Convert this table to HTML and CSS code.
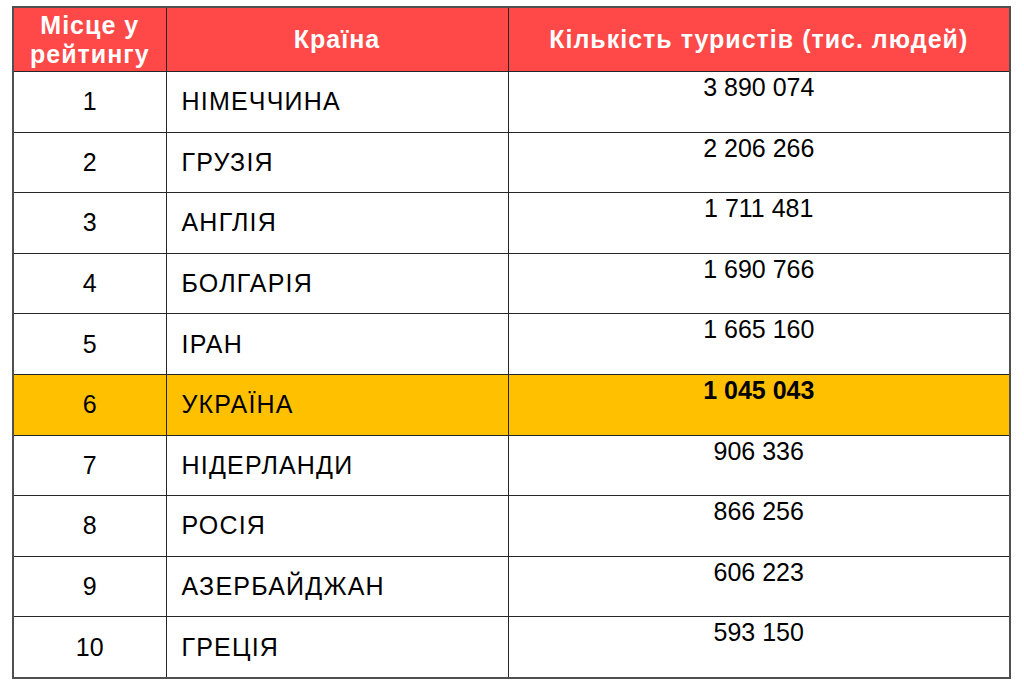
FILE: index.html
```html
<!DOCTYPE html>
<html lang="uk">
<head>
<meta charset="utf-8">
<title>Рейтинг країн</title>
<link rel="stylesheet" href="styles.css">
</head>
<body>
<table class="rating">
  <colgroup>
    <col class="col-rank">
    <col class="col-country">
    <col class="col-count">
  </colgroup>
  <thead>
    <tr class="head-row">
      <th>Місце у рейтингу</th>
      <th>Країна</th>
      <th>Кількість туристів (тис. людей)</th>
    </tr>
  </thead>
  <tbody>
    <tr><td class="rank">1</td><td class="country">НІМЕЧЧИНА</td><td class="count">3 890 074</td></tr>
    <tr><td class="rank">2</td><td class="country">ГРУЗІЯ</td><td class="count">2 206 266</td></tr>
    <tr><td class="rank">3</td><td class="country">АНГЛІЯ</td><td class="count">1 711 481</td></tr>
    <tr><td class="rank">4</td><td class="country">БОЛГАРІЯ</td><td class="count">1 690 766</td></tr>
    <tr><td class="rank">5</td><td class="country">ІРАН</td><td class="count">1 665 160</td></tr>
    <tr class="highlight"><td class="rank">6</td><td class="country">УКРАЇНА</td><td class="count strong">1 045 043</td></tr>
    <tr><td class="rank">7</td><td class="country">НІДЕРЛАНДИ</td><td class="count">906 336</td></tr>
    <tr><td class="rank">8</td><td class="country">РОСІЯ</td><td class="count">866 256</td></tr>
    <tr><td class="rank">9</td><td class="country">АЗЕРБАЙДЖАН</td><td class="count">606 223</td></tr>
    <tr><td class="rank">10</td><td class="country">ГРЕЦІЯ</td><td class="count">593 150</td></tr>
  </tbody>
</table>
</body>
</html>
```
FILE: styles.css
```css
html, body {
  margin: 0;
  padding: 0;
  background: #ffffff;
}

body {
  padding: 6px 0 0 12px;
  font-family: "Liberation Sans", Arial, sans-serif;
  color: #000;
}

.rating {
  border-collapse: collapse;
  table-layout: fixed;
  width: 997px;
  border: 2px solid #505050;
}

.col-rank { width: 153px; }
.col-country { width: 342px; }
.col-count { width: 502px; }

.rating th,
.rating td {
  border: 1px solid #262626;
  padding: 0;
  font-size: 25px;
  line-height: 29px;
}

.head-row th {
  height: 63px;
  background: #ff4848;
  color: #ffffff;
  font-weight: bold;
  text-align: center;
  vertical-align: middle;
  padding: 0 16px;
  letter-spacing: 1px;
}

.rating tbody td {
  height: 58.6px;
}

.rank {
  text-align: center;
  vertical-align: middle;
}

.rating .country {
  text-align: left;
  vertical-align: middle;
  padding-left: 15px;
  letter-spacing: 1.2px;
}

.rating .count {
  text-align: center;
  vertical-align: top;
  padding-top: 1px;
}

.strong {
  font-weight: bold;
}

.highlight td {
  background: #ffc000;
}
```
